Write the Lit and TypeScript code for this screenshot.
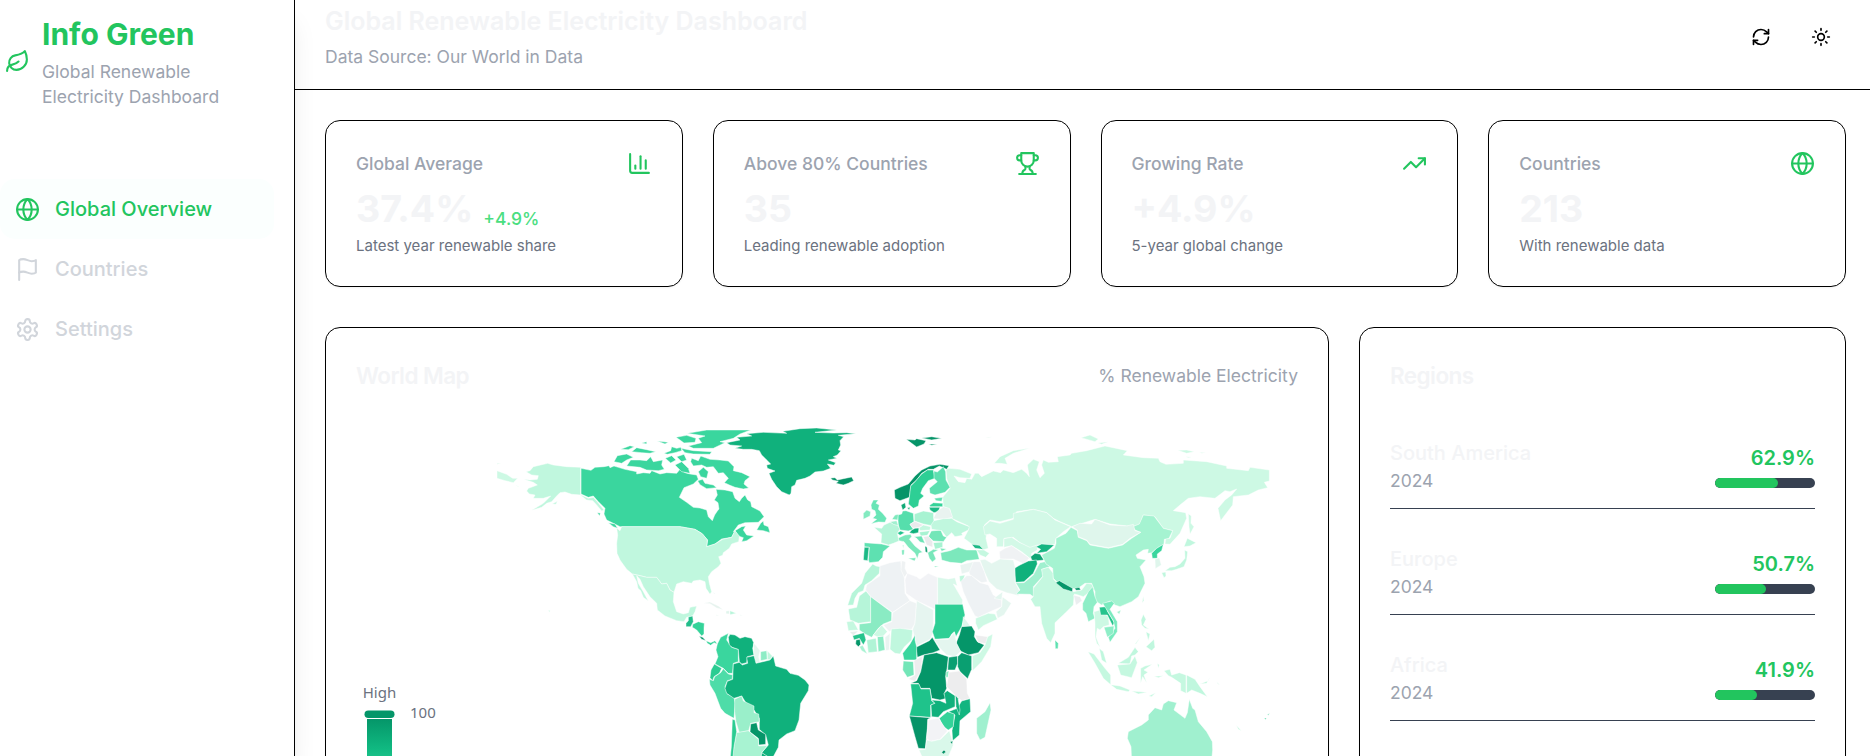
import { LitElement, html, css, svg } from "lit";
import { customElement } from "lit/decorators.js";

type Shape = [string, string];

const ICONS: Record<string, unknown> = {
  leaf: svg`<path d="M11 20A7 7 0 0 1 9.8 6.1C15.5 5 17 4.48 19 2c1 2 2 4.18 2 8 0 5.5-4.78 10-10 10Z"/><path d="M2 21c0-3 1.85-5.36 5.08-6C9.5 14.52 12 13 13 12"/>`,
  globe: svg`<circle cx="12" cy="12" r="10"/><path d="M12 2a14.5 14.5 0 0 0 0 20 14.5 14.5 0 0 0 0-20"/><path d="M2 12h20"/>`,
  flag: svg`<path d="M4 15s1-1 4-1 5 2 8 2 4-1 4-1V3s-1 1-4 1-5-2-8-2-4 1-4 1z"/><path d="M4 22v-7"/>`,
  settings: svg`<path d="M12.22 2h-.44a2 2 0 0 0-2 2v.18a2 2 0 0 1-1 1.73l-.43.25a2 2 0 0 1-2 0l-.15-.08a2 2 0 0 0-2.73.73l-.22.38a2 2 0 0 0 .73 2.73l.15.1a2 2 0 0 1 1 1.72v.51a2 2 0 0 1-1 1.74l-.15.09a2 2 0 0 0-.73 2.73l.22.38a2 2 0 0 0 2.73.73l.15-.08a2 2 0 0 1 2 0l.43.25a2 2 0 0 1 1 1.73V20a2 2 0 0 0 2 2h.44a2 2 0 0 0 2-2v-.18a2 2 0 0 1 1-1.73l.43-.25a2 2 0 0 1 2 0l.15.08a2 2 0 0 0 2.73-.73l.22-.39a2 2 0 0 0-.73-2.73l-.15-.08a2 2 0 0 1-1-1.74v-.5a2 2 0 0 1 1-1.74l.15-.09a2 2 0 0 0 .73-2.73l-.22-.38a2 2 0 0 0-2.73-.73l-.15.08a2 2 0 0 1-2 0l-.43-.25a2 2 0 0 1-1-1.73V4a2 2 0 0 0-2-2z"/><circle cx="12" cy="12" r="3"/>`,
  refresh: svg`<path d="M3 12a9 9 0 0 1 9-9 9.75 9.75 0 0 1 6.74 2.74L21 8"/><path d="M21 3v5h-5"/><path d="M21 12a9 9 0 0 1-9 9 9.75 9.75 0 0 1-6.74-2.74L3 16"/><path d="M8 16H3v5"/>`,
  sun: svg`<circle cx="12" cy="12" r="4"/><path d="M12 2v2M12 20v2M4.93 4.93l1.41 1.41M17.66 17.66l1.41 1.41M2 12h2M20 12h2M6.34 17.66l-1.41 1.41M19.07 4.93l-1.41 1.41"/>`,
  chart: svg`<path d="M3 3v16a2 2 0 0 0 2 2h16"/><path d="M18 17V9"/><path d="M13 17V5"/><path d="M8 17v-3"/>`,
  trophy: svg`<path d="M6 9H4.5a2.5 2.5 0 0 1 0-5H6"/><path d="M18 9h1.5a2.5 2.5 0 0 0 0-5H18"/><path d="M4 22h16"/><path d="M10 14.66V17c0 .55-.47.98-.97 1.21C7.85 18.75 7 20.24 7 22"/><path d="M14 14.66V17c0 .55.47.98.97 1.21C16.15 18.75 17 20.24 17 22"/><path d="M18 2H6v7a6 6 0 0 0 12 0V2Z"/>`,
  trend: svg`<path d="M22 7l-8.5 8.5-5-5L2 17"/><path d="M16 7h6v6"/>`,
};

const icon = (name: string) =>
  html`<svg class="icon" viewBox="0 0 24 24" fill="none" stroke="currentColor" stroke-width="2" stroke-linecap="round" stroke-linejoin="round">${ICONS[name]}</svg>`;

const AMERICAS: Shape[] = [
  ["#10b17c", "740,98 780,90 770,82 815,78 800,71 850,67 920,70 908,64 960,56 1010,54 1070,60 1005,67 1060,69 1100,68 1128,71 1075,76 1091,80 1080,92 1082,105 1075,120 1083,122 1072,135 1060,140 1071,145 1045,150 1067,158 1062,166 1042,162 1052,175 1030,183 1005,186 990,198 975,205 950,211 945,225 935,230 933,250 928,255 905,245 890,230 875,208 867,190 885,183 862,175 860,165 872,162 858,148 845,135 838,122 815,118 790,118 765,115 785,108 750,105"],
  ["#3ad69e", "303,175 333,181 345,172 372,170 387,167 390,173 402,168 415,172 435,178 470,185 470,192 490,188 510,190 515,182 540,192 560,188 590,190 600,178 615,188 630,192 650,195 655,208 640,222 612,233 598,262 620,277 640,292 660,294 680,300 685,320 697,332 704,315 712,303 717,297 714,278 703,270 712,255 708,238 735,240 758,245 765,265 778,275 785,265 795,255 803,270 812,275 815,290 840,303 852,320 835,337 795,338 775,345 760,365 785,350 797,348 790,360 800,375 822,378 800,392 785,395 790,383 775,378 765,362 755,382 725,387 705,402 680,410 683,390 665,370 645,358 600,350 420,350 400,340 380,330 372,312 375,295 355,275 340,258 325,262 303,252"],
  ["#3ad69e", "830,360 842,340 850,333 852,345 865,350 870,368 850,362"],
  ["#3ad69e", "385,338 405,342 413,355 400,350"],
  ["#3ad69e", "352,308 361,309 359,318"],
  ["#3ad69e", "635,145 655,152 662,138 690,148 720,150 745,153 762,170 760,182 785,188 810,200 795,212 792,222 806,234 790,237 765,232 748,225 733,218 745,205 730,188 715,190 700,170 680,172 665,165 640,168 632,155"],
  ["#3ad69e", "440,168 452,150 480,150 500,152 512,140 520,155 548,150 545,165 553,178 535,182 500,180 480,172"],
  ["#3ad69e", "402,155 412,137 440,132 460,142 440,150 425,160"],
  ["#3ad69e", "622,70 680,60 812,60 780,72 760,85 720,95 735,98 700,115 640,115 625,108 665,98 655,85 675,78"],
  ["#3ad69e", "588,82 620,76 648,85 645,97 612,99 600,90"],
  ["#3ad69e", "603,115 640,122 695,125 690,133 640,132 615,128"],
  ["#3ad69e", "455,125 470,113 500,119 527,125 510,130 485,128"],
  ["#3ad69e", "422,118 450,107 463,110 445,119"],
  ["#3ad69e", "485,99 500,95 500,102"],
  ["#3ad69e", "532,93 565,97 555,102"],
  ["#3ad69e", "552,130 572,122 575,110 590,115 603,112 605,122 585,128 562,133"],
  ["#3ad69e", "556,145 575,137 588,150 572,159"],
  ["#3ad69e", "590,140 612,133 620,150 605,155"],
  ["#3ad69e", "585,165 605,155 625,175 630,190 605,185"],
  ["#3ad69e", "655,185 670,172 685,185 680,205 662,200"],
  ["#3ad69e", "653,212 668,208 675,220 700,225 710,233 680,236 660,224"],
  ["#c0f7de", "302,172 260,170 220,165 203,160 160,170 150,182 138,185 155,195 175,197 172,208 150,210 130,208 160,217 172,225 145,235 140,243 148,252 165,255 160,265 190,265 212,258 190,280 155,301 185,292 200,280 215,275 230,258 240,248 255,246 275,253 303,255 325,265 340,262 352,275 372,300 365,303 350,285 338,272 320,270 302,256"],
  ["#c0f7de", "216,282 232,274 228,283"],
  ["#cdf9e4", "51,182 80,193 98,205 113,205 100,218 75,212 51,205"],
  ["#cdf9e4", "51,160 64,160 51,163"],
  ["#cdf9e4", "105,226 122,230 112,229"],
  ["#c0f7de", "410,354 420,362 425,350 600,350 645,358 668,372 682,390 680,410 705,402 728,388 755,382 765,362 778,378 776,395 755,402 748,415 730,428 728,436 716,440 723,460 715,470 695,485 685,500 688,520 695,545 690,553 678,535 675,515 660,510 640,513 635,520 610,515 590,522 582,547 570,540 560,520 545,522 530,502 500,502 480,497 457,492 440,478 420,450 411,430 410,400 413,375"],
  ["#c0f7de", "457,492 480,497 500,502 530,502 545,522 560,520 570,540 582,547 580,575 590,605 610,612 625,608 630,592 650,588 645,605 638,618 620,622 612,635 590,632 555,618 532,600 530,580 510,560 490,530 480,508 470,497 475,520 490,545 505,573 490,562 482,542 474,535 470,515"],
  ["#c9f8e3", "205,600 211,602 208,607"],
  ["#22bd8a", "618,640 625,632 625,621 638,618 640,635 632,650 618,650"],
  ["#34d399", "638,643 655,635 673,640 672,655 672,672 665,678 650,660 637,652"],
  ["#059669", "657,678 668,682 678,692 665,688"],
  ["#34d399", "678,692 692,698 705,692 712,702 702,698 692,706 682,700"],
  ["#e6f3ee", "670,580 690,576 715,588 730,599 710,594 690,581"],
  ["#e0f5ec", "738,603 748,602 748,612 738,611"],
  ["#b6f5d9", "750,602 769,610 750,614"],
  ["#e0f5ec", "708,614 718,616 710,617"],
  ["#e0f5ec", "780,614 788,616 782,617"],
  ["#e9f7f1", "700,545 706,552 702,552"],
  ["#3ad69e", "712,702 722,682 745,670 740,690 755,712 775,718 775,755 760,760 758,790 745,790 730,775 705,762 714,740 708,720"],
  ["#10b17c", "745,682 750,673 765,675 780,685 795,680 815,685 822,700 818,715 822,735 802,740 800,758 785,762 778,755 775,718 757,712 748,705"],
  ["#e4f6ee", "820,700 828,706 840,722 836,740 840,756 826,760 822,735"],
  ["#8decc5", "842,725 860,722 862,748 842,752"],
  ["#c0f7de", "862,722 877,738 870,750 862,748"],
  ["#2bcc92", "693,780 703,762 725,775 718,790 702,800 698,812 690,803"],
  ["#4edca8", "688,808 700,812 704,800 722,788 730,776 745,792 758,795 756,808 742,812 735,830 742,852 762,862 766,880 762,925 735,910 722,895 705,850 690,825"],
  ["#10b17c", "760,762 778,757 787,765 803,760 800,742 822,737 828,760 870,750 880,738 887,768 920,778 930,790 955,796 975,810 987,825 985,842 962,880 957,930 945,962 920,972 897,990 895,1012 880,1040 862,1040 845,1028 865,1005 857,975 838,958 838,925 822,900 800,882 785,858 762,865 740,850 735,835 742,814 758,808"],
  ["#9aefca", "764,868 785,858 790,873 822,888 822,908 836,912 838,935 812,940 806,962 778,968 768,935 764,905"],
  ["#059669", "812,942 830,938 835,960 857,973 857,1003 836,1005 835,985 810,966"],
  ["#a8f3d2", "770,968 805,962 835,988 836,1008 862,1007 845,1028 840,1060 755,1060 762,1010"],
  ["#2bcc92", "757,928 765,930 770,965 762,1010 757,1060 749,1060 754,1010"],
  ["#10b17c", "845,1028 872,1045 868,1060 842,1060"],
];

const EURAFRICA: Shape[] = [
  ["#cdf9e4", "438,178 447,175 480,178 515,192 510,205 480,203 462,198 475,215 495,218 500,205 515,208 525,190 535,190 545,200 580,183 602,188 610,180 640,188 665,178 680,190 688,200 682,165 700,148 718,155 710,180 720,203 733,190 725,165 730,150 745,157 775,155 772,140 810,135 815,130 860,122 915,108 982,122 970,135 1030,143 1075,145 1080,155 1098,163 1150,160 1150,150 1220,155 1280,168 1280,175 1345,182 1350,172 1408,180 1408,213 1393,217 1403,233 1375,240 1345,255 1300,260 1298,285 1275,315 1262,332 1254,295 1275,270 1295,255 1310,237 1290,245 1275,242 1245,265 1200,260 1165,265 1140,285 1120,302 1157,308 1160,325 1140,370 1110,403 1095,402 1097,385 1110,385 1118,362 1090,355 1065,320 1030,315 1020,342 1000,350 930,342 885,328 840,342 815,350 780,335 760,325 740,308 700,298 650,305 640,325 600,335 570,330 553,345 560,370 558,385 565,415 548,420 535,408 515,402 492,385 505,360 505,348 455,325 450,298 430,290 428,262 450,235 440,205"],
  ["#cdf9e4", "583,160 600,140 640,122 690,114 640,130 615,145 622,163 600,160"],
  ["#dff8ec", "555,82 578,80 565,83"],
  ["#069468", "92,204 105,203 112,210 130,206 155,201 161,212 145,220 130,225 108,220 115,214 97,210"],
  ["#069468", "319,88 345,90 350,86 378,92 372,102 350,111 335,100"],
  ["#069468", "365,84 395,80 425,85 395,90"],
  ["#069468", "386,102 412,103 395,106"],
  ["#069468", "283,240 300,232 325,222 345,198 365,180 390,168 420,163 447,167 440,178 418,168 400,178 385,178 365,190 350,210 333,225 328,262 300,272 285,265"],
  ["#2ecf95", "328,262 332,228 345,215 365,192 382,180 400,180 405,205 385,212 368,235 362,250 372,258 358,270 355,288 340,295 325,282"],
  ["#5de0b0", "402,183 412,186 430,170 437,185 438,210 450,232 435,247 405,255 390,250 388,235 412,215 402,205"],
  ["#0fa976", "303,285 315,278 318,292 308,300"],
  ["#0fa976", "322,293 331,292 327,300"],
  ["#69e5b6", "213,285 220,270 235,270 228,280 238,285 235,298 248,310 260,325 255,337 235,336 213,341 230,328 218,325 228,315 225,302 215,298"],
  ["#83eac0", "190,310 200,300 212,305 210,318 190,328"],
  ["#b6f5d9", "222,352 245,355 252,345 270,337 292,345 300,357 292,370 297,393 280,400 265,405 243,398 245,372"],
  ["#56deac", "293,315 305,312 308,303 318,302 340,310 342,335 330,343 340,358 325,363 300,360 295,345"],
  ["#7ee9bd", "276,328 285,315 295,313 293,330"],
  ["#a0f0cf", "270,335 290,332 295,347 280,343"],
  ["#a8f3d2", "343,312 370,303 400,308 402,335 395,347 370,342 343,333"],
  ["#eaeaec", "330,343 345,334 370,345 355,353 338,354"],
  ["#10b17c", "328,368 335,360 345,355 357,354 355,368 340,371"],
  ["#1fc38b", "292,369 302,363 314,368 300,376"],
  ["#7ce8bc", "295,384 315,375 332,373 335,380 328,388 345,408 368,427 357,430 352,446 345,430 325,412 312,395 297,392"],
  ["#7ce8bc", "324,445 348,443 344,453"],
  ["#7ce8bc", "305,420 313,419 312,434 306,435"],
  ["#b6f5d9", "307,405 312,405 310,416"],
  ["#5ee1b1", "193,398 245,402 270,408 250,425 248,442 235,455 208,458 205,450 208,412 193,410"],
  ["#1bb985", "193,412 207,412 203,452 190,450"],
  ["#c5f8e0", "357,354 370,345 392,350 390,360 360,362"],
  ["#a8f3d2", "358,366 390,362 382,376 362,378"],
  ["#73e6b8", "385,380 394,363 422,360 430,378 440,382 430,395 400,393"],
  ["#a8f3d2", "400,398 428,396 428,412 405,418"],
  ["#eaeaec", "370,380 385,378 398,395 398,412 380,405"],
  ["#6be3b5", "342,380 365,378 375,400 360,396 350,385"],
  ["#059669", "375,408 381,412 383,428 376,425"],
  ["#78e7ba", "383,428 400,418 415,420 400,428 408,447 397,456 388,445"],
  ["#7ce8bc", "403,468 417,469 405,472"],
  ["#5ee1b1", "403,265 428,262 425,274 408,272"],
  ["#34d399", "389,286 400,278 428,280 428,290 390,290"],
  ["#1bb985", "388,292 420,292 415,305 402,308 390,300"],
  ["#e9f3f0", "402,322 410,305 430,290 448,295 458,322 430,328 402,326"],
  ["#c0f7de", "402,332 430,326 455,325 470,335 508,350 505,360 485,370 488,376 465,380 455,368 440,382 425,362 395,358 393,345"],
  ["#7ce8bc", "422,428 450,422 475,412 500,420 530,420 538,448 500,452 485,460 450,457 425,450"],
  ["#7ce8bc", "420,414 440,417 425,424"],
  ["#1bb985", "515,403 538,406 550,418 525,415"],
  ["#c5f8e0", "530,420 552,420 568,430 557,442 540,435"],
  ["#d3f9e7", "550,350 570,333 600,340 640,328 640,310 660,306 700,298 740,308 765,330 812,350 790,365 768,385 765,403 715,405 690,415 660,398 640,382 612,385 610,410 590,410 590,385 570,372 555,375"],
  ["#d3f9e7", "612,386 635,382 660,398 690,412 712,405 712,420 695,430 692,447 665,425 635,407 612,412"],
  ["#f0f2f4", "598,425 615,415 635,407 665,428 688,444 672,462 640,447 600,447"],
  ["#15b581", "708,410 725,402 763,405 740,425 710,430 722,418"],
  ["#0fa675", "692,440 705,430 720,432 732,450 705,453 695,450"],
  ["#10b17c", "643,475 660,465 685,453 710,450 712,462 700,490 672,515 647,517"],
  ["#e4f6ef", "540,450 555,448 575,460 600,447 640,450 645,470 645,517 660,545 655,557 620,548 590,537 567,515 553,485"],
  ["#eef2f4", "520,455 540,455 553,485 562,515 545,518 510,495 505,480"],
  ["#e9f4f1", "480,465 520,455 508,485 485,492"],
  ["#c0f7de", "478,498 495,495 487,517 480,515"],
  ["#eef2f4", "482,515 500,497 515,497 540,518 565,525 580,555 605,570 605,590 570,605 535,622 525,618 505,580 490,545"],
  ["#cdf9e4", "527,625 565,610 585,612 592,628 550,647 535,660 527,640"],
  ["#e4f6ef", "607,560 634,580 612,615 593,625 588,605 605,590"],
  ["#e4f6ef", "582,565 608,545 605,570"],
  ["#a0f0cf", "648,552 660,540 647,518 672,518 700,495 713,470 720,458 735,455 750,470 725,478 730,497 700,530 705,563 690,553"],
  ["#b6f5d9", "218,462 228,468 240,470 238,490 215,512 195,525 190,542 175,548 165,565 160,585 143,586 155,550 185,520 195,490"],
  ["#eef2f4", "240,468 270,458 302,453 305,480 313,498 315,550 330,572 278,607 212,560 197,540 200,525 240,497"],
  ["#eff2f3", "305,452 317,455 315,475 322,490 313,502 303,480"],
  ["#f2f3f6", "322,490 350,500 360,508 385,490 412,502 412,595 405,598 350,572 318,550 315,510"],
  ["#d9f8ea", "413,502 445,507 465,503 472,528 460,522 488,570 487,583 413,583"],
  ["#b6f5d9", "145,597 170,592 178,558 198,543 212,560 212,635 175,640 150,630"],
  ["#8aebc3", "212,560 275,607 275,632 250,642 235,655 215,682 195,672 178,660 178,642 212,638"],
  ["#c5f8e0", "140,635 160,633 175,660 145,662"],
  ["#e6efec", "148,665 175,663 160,677"],
  ["#26c48d", "158,677 192,668 198,690 190,705 178,685 162,690"],
  ["#059669", "168,690 180,688 182,703 175,710 167,702"],
  ["#a8f3d2", "178,710 188,706 202,732 185,722"],
  ["#b0f4d6", "200,690 228,685 232,725 205,728"],
  ["#8decc5", "232,680 250,678 255,720 235,725"],
  ["#cdf9e4", "220,675 245,645 262,665 250,678 232,680"],
  ["#e9f4f1", "255,682 270,670 268,720 257,722"],
  ["#eff3f4", "278,608 330,572 350,580 345,640 335,658 280,657 268,665 250,645 275,635"],
  ["#c0f7de", "274,657 300,655 338,660 335,690 312,712 300,732 285,730 270,718"],
  ["#e6f5f0", "350,572 400,600 400,640 398,672 390,688 350,708 345,690 338,658 345,640"],
  ["#2ecf95", "405,583 488,583 495,615 485,650 468,680 463,665 455,672 448,685 405,688 397,665 405,640"],
  ["#dff6ec", "490,620 505,640 525,668 500,650 487,648"],
  ["#059669", "485,650 515,648 525,665 523,680 532,695 553,705 535,728 505,735 480,722 468,700 478,675"],
  ["#e4f6ef", "402,688 445,688 463,667 470,700 482,724 465,740 440,735 420,715"],
  ["#ededee", "525,675 563,680 560,702 535,697"],
  ["#cdf9e4", "563,680 578,672 572,710 545,755 518,782 517,738 540,728 555,705"],
  ["#059669", "348,712 388,692 397,682 420,720 400,728 370,735 352,742"],
  ["#3ad69e", "308,730 330,702 345,675 345,690 350,710 350,750 312,750"],
  ["#73e6b8", "310,753 340,755 342,795 322,802 308,780"],
  ["#ededee", "342,752 368,738 362,785 345,814 325,807 345,795"],
  ["#059669", "372,735 410,728 445,740 442,770 437,800 440,835 432,852 440,865 420,870 395,865 390,835 362,835 355,820 332,820 350,812 362,785"],
  ["#0a9f71", "446,742 472,738 473,760 465,780 443,780"],
  ["#0a9f71", "473,740 485,728 515,738 515,778 503,806 480,785 473,770"],
  ["#8decc5", "438,785 447,783 445,802 438,802"],
  ["#ededee", "447,787 478,783 500,808 502,850 510,866 485,872 465,855 440,830"],
  ["#1fc38b", "332,822 357,822 363,837 390,837 395,872 405,880 392,885 392,922 328,918 338,880"],
  ["#10b17c", "395,870 420,872 438,880 432,850 442,842 465,857 465,890 430,905 415,922 395,920 393,885 405,880"],
  ["#12b580", "472,895 485,873 510,866 512,905 480,932 478,975 458,992 456,962 465,915 445,905"],
  ["#10b17c", "466,855 474,865 480,900 478,915 468,890"],
  ["#34d399", "418,925 442,905 463,912 460,950 445,960 430,950"],
  ["#069468", "328,918 350,920 392,923 383,928 382,955 376,1016 355,1015 345,980"],
  ["#f2f3f6", "385,930 415,925 442,963 420,988 390,994 380,985 383,955"],
  ["#d9f8ea", "376,1018 380,990 395,994 422,988 448,962 455,985 460,1005 445,1040 430,1060 375,1060 357,1020"],
  ["#069468", "425,1027 432,1020 438,1026 430,1032"],
  ["#069468", "450,995 459,993 456,1003"],
  ["#a0f0cf", "530,925 555,905 570,878 573,900 555,982 540,990 530,970"],
];

const ASIA: Shape[] = [
  ["#cdf9e4", "183,83 210,75 235,87 225,95"],
  ["#cdf9e4", "233,99 265,95 245,103"],
  ["#cdf9e4", "473,121 500,120 523,125 500,130"],
  ["#cdf9e4", "538,127 558,128 545,130"],
  ["#cdf9e4", "497,140 514,141 505,143"],
  ["#cdf9e4", "505,311 514,318 513,340 522,350 510,373 507,350"],
  ["#c5f8e0", "40,560 40,535 68,500 65,478 85,472 100,490 100,507 120,528 160,545 185,540 200,520 215,522 225,538 210,545 190,560 175,555 163,552 160,585 135,610 105,638 105,670 92,698 80,685 65,640 60,590 45,590 32,568"],
  ["#ebeef0", "161,556 180,560 186,572 168,586"],
  ["#5ee1b1", "105,690 115,700 114,716 106,716"],
  ["#a5f3d1", "153,352 172,362 175,382 200,392 210,405 265,415 308,405 335,385 362,367 345,360 338,350 358,342 370,315 402,318 430,355 458,362 447,385 433,388 432,402 410,415 395,428 383,430 385,418 370,420 348,435 352,445 378,450 360,470 372,500 375,520 355,560 335,575 300,590 285,585 270,573 245,585 225,572 225,545 215,520 195,520 170,538 120,525 100,505 98,475 78,462 65,435 103,415 108,400 108,385 138,370"],
  ["#059669", "107,518 118,512 158,535 157,545 130,537"],
  ["#059669", "164,535 178,532 182,540 168,541"],
  ["#dff6ec", "157,350 180,340 215,342 225,328 270,345 320,348 340,343 345,362 362,367 330,385 308,403 265,413 210,403 200,390 175,380 172,360"],
  ["#a5f3d1", "290,606 303,600 298,613"],
  ["#cdf9e4", "370,558 366,578 372,572"],
  ["#3ad69e", "395,430 410,415 430,403 425,422 412,432 412,445 397,445"],
  ["#dff6ec", "405,448 418,443 424,465 406,476"],
  ["#c0f7de", "425,488 437,486 438,498 432,503"],
  ["#c0f7de", "435,482 450,472 465,470 480,462 495,445 494,420 503,425 500,450 492,470 470,478 455,482"],
  ["#c0f7de", "492,410 502,385 528,398 510,408"],
  ["#8eeec7", "188,580 205,545 218,530 225,560 232,577 222,590 220,610 225,625 205,635 198,610 188,600"],
  ["#cdf9e4", "222,605 240,600 265,620 268,645 250,650 240,660 232,655 228,680 240,712 230,700 225,680 225,640"],
  ["#26c48d", "238,592 258,590 263,605 283,638 278,648 262,615 242,615"],
  ["#7aebbf", "248,580 275,573 283,580 270,598 292,635 292,665 270,697 265,682 285,655 280,632 262,602"],
  ["#8eeec7", "252,652 282,648 280,670 262,682"],
  ["#c0f7de", "238,715 250,725 260,760 245,750"],
  ["#c0f7de", "295,760 325,742 345,712 355,725 345,735 335,738 330,762"],
  ["#c5f8e0", "292,765 330,762 345,738 352,758 335,803 302,795"],
  ["#c5f8e0", "204,725 222,732 255,775 272,795 272,824 250,805 225,760"],
  ["#c5f8e0", "272,824 300,828 330,840 325,845 290,838"],
  ["#c5f8e0", "335,843 382,847 355,852"],
  ["#c5f8e0", "386,858 407,848 395,860"],
  ["#c5f8e0", "362,775 375,768 397,763 372,780 384,787 372,795 380,818 368,800 362,820"],
  ["#c5f8e0", "412,760 418,765 415,775"],
  ["#c5f8e0", "402,799 430,797 415,803"],
  ["#c5f8e0", "432,782 450,778 455,795 478,788 498,795 498,850 482,842 482,820 455,802 445,797"],
  ["#c0f7de", "500,795 525,808 540,830 562,860 540,850 515,840 500,850"],
  ["#c0f7de", "540,822 565,812 570,800 560,820"],
  ["#c9f8e3", "590,815 600,825 594,822"],
  ["#c0f7de", "363,630 370,613 378,628 370,645 386,657 375,655 365,645"],
  ["#c0f7de", "378,665 390,672 385,692"],
  ["#c0f7de", "378,710 402,688 405,712 395,722"],
  ["#c0f7de", "345,702 362,680 348,702"],
  ["#a0f0cf", "322,985 325,965 365,945 385,930 385,915 405,893 425,900 430,882 445,872 470,878 462,900 495,925 502,908 508,868 518,895 525,900 535,935 560,965 577,995 578,1020 574,1060 335,1060 333,1010"],
  ["#34d399", "733,924 739,924 737,929"],
  ["#34d399", "742,914 749,910 745,916"],
  ["#c0f7de", "649,946 664,962 655,958"],
];

const layer = (x: number, y: number, shapes: Shape[]) =>
  svg`<g transform="translate(${x} ${y}) scale(0.33333)" stroke="#fff" stroke-opacity=".85" stroke-width="1.7" stroke-linejoin="round">${shapes.map(
    ([fill, points]) => svg`<polygon fill=${fill} points=${points} />`
  )}</g>`;

@customElement("app-root")
export class AppRoot extends LitElement {
  static styles = css`
    :host { display: flex; width: 100%; height: 756px; overflow: hidden; background: #fff; font-family: Inter, sans-serif; font-size: 20px; line-height: 30px; }
    * { box-sizing: border-box; }
    h1, h2, h3, p { margin: 0; }
    .icon { display: block; width: 25px; height: 25px; flex: none; }
    .sidebar { flex: none; width: 295px; border-right: 1px solid #000; background: #fff; z-index: 1; box-shadow: 0 20px 25px -5px rgba(0,0,0,.1), 0 8px 10px -6px rgba(0,0,0,.1); padding: 14px 20px 0 0; }
    .brand { display: flex; align-items: center; gap: 12px; padding-left: 5px; color: #22c55e; }
    .brand h1 { font-size: 30px; line-height: 40px; font-weight: 700; }
    .brand p { margin-top: 5px; width: 200px; font-size: 17.5px; line-height: 25px; color: #9ca3af; }
    .nav { padding-top: 70px; }
    .link { display: flex; align-items: center; gap: 15px; height: 60px; padding: 0 15px; border-radius: 15px; font-weight: 500; color: #d1d5db; }
    .link.active { color: #22c55e; background: #fbfffe; }
    .main { flex: 1; min-width: 0; }
    .header { display: flex; align-items: center; justify-content: space-between; height: 90px; border-bottom: 1px solid #000; padding: 4px 24px 20px 30px; }
    .header h2 { font-size: 25px; line-height: 35px; font-weight: 600; color: #f3f4f6; }
    .header p { margin-top: 5px; font-size: 17.5px; line-height: 25px; color: #9ca3af; }
    .actions { display: flex; gap: 10px; }
    .action { display: grid; place-items: center; width: 50px; height: 50px; }
    .action .icon { width: 20px; height: 20px; }
    .content { padding: 30px 24px 0 30px; display: flex; flex-direction: column; gap: 40px; }
    .stats { display: grid; grid-template-columns: repeat(4, 1fr); gap: 30px; }
    .panels { display: grid; grid-template-columns: repeat(3, 1fr); gap: 30px; }
    .card { border: 1px solid #000; border-radius: 15px; padding: 30px; background: #fff; box-shadow: 0 1px 2px rgba(0,0,0,.05); }
    .stat-head { display: flex; align-items: center; justify-content: space-between; height: 25px; color: #22c55e; }
    .stat-head h3 { font-size: 17.5px; line-height: 25px; font-weight: 500; color: #9ca3af; }
    .stat-value { display: flex; align-items: flex-end; gap: 10px; margin-top: 10px; height: 45px; }
    .value { font-size: 37.5px; line-height: 45px; font-weight: 700; color: #f3f4f6; }
    .delta { font-size: 17.5px; line-height: 25px; font-weight: 500; color: #4ade80; }
    .note { margin-top: 5px; font-size: 15px; line-height: 20px; color: #6b7280; }
    .map { grid-column: span 2; height: 620px; }
    .panel-head { display: flex; align-items: center; justify-content: space-between; height: 35px; margin-bottom: 30px; }
    .panel-head h3 { font-size: 22.5px; line-height: 35px; font-weight: 600; letter-spacing: -0.025em; color: #f3f4f6; }
    .panel-head span { font-size: 17.5px; line-height: 25px; color: #9ca3af; }
    .world { display: block; width: 942px; height: 500px; }
    .legend { font-family: "Noto Sans", sans-serif; font-size: 15px; fill: #6b7280; }
    .regions { display: flex; flex-direction: column; gap: 20px; }
    .region { display: flex; align-items: center; justify-content: space-between; padding: 15px 0; border-bottom: 1px solid #374151; }
    .name { font-weight: 500; color: #f3f4f6; }
    .year { font-size: 17.5px; line-height: 25px; color: #9ca3af; }
    .share { width: 100px; }
    .pct { text-align: right; font-weight: 600; color: #22c55e; }
    .track { margin-top: 5px; height: 10px; border-radius: 5px; background: #374151; overflow: hidden; }
    .fill { height: 10px; border-radius: 5px; background: #22c55e; }
  `;

  private stats = [
    { label: "Global Average", icon: "chart", value: "37.4%", delta: "+4.9%", note: "Latest year renewable share" },
    { label: "Above 80% Countries", icon: "trophy", value: "35", delta: "", note: "Leading renewable adoption" },
    { label: "Growing Rate", icon: "trend", value: "+4.9%", delta: "", note: "5-year global change" },
    { label: "Countries", icon: "globe", value: "213", delta: "", note: "With renewable data" },
  ];

  private regions = [
    { name: "South America", pct: 62.9 },
    { name: "Europe", pct: 50.7 },
    { name: "Africa", pct: 41.9 },
  ];

  render() {
    return html`
      <aside class="sidebar">
        <div class="brand">
          ${icon("leaf")}
          <div><h1>Info Green</h1><p>Global Renewable Electricity Dashboard</p></div>
        </div>
        <nav class="nav">
          <div class="link active">${icon("globe")}<span>Global Overview</span></div>
          <div class="link">${icon("flag")}<span>Countries</span></div>
          <div class="link">${icon("settings")}<span>Settings</span></div>
        </nav>
      </aside>
      <main class="main">
        <header class="header">
          <div><h2>Global Renewable Electricity Dashboard</h2><p>Data Source: Our World in Data</p></div>
          <div class="actions">
            <div class="action">${icon("refresh")}</div>
            <div class="action">${icon("sun")}</div>
          </div>
        </header>
        <div class="content">
          <section class="stats">
            ${this.stats.map(
              (s) => html`<div class="card">
                <div class="stat-head"><h3>${s.label}</h3>${icon(s.icon)}</div>
                <div class="stat-value"><span class="value">${s.value}</span>${s.delta ? html`<span class="delta">${s.delta}</span>` : ""}</div>
                <p class="note">${s.note}</p>
              </div>`
            )}
          </section>
          <section class="panels">
            <div class="card map">
              <div class="panel-head"><h3>World Map</h3><span>% Renewable Electricity</span></div>
              <svg class="world" viewBox="356 423 942 500">
                <defs>
                  <linearGradient id="scale" x1="0" y1="0" x2="0" y2="1">
                    <stop offset="0" stop-color="#059669" />
                    <stop offset=".17" stop-color="#10b981" />
                    <stop offset=".34" stop-color="#34d399" />
                    <stop offset=".5" stop-color="#6ee7b7" />
                    <stop offset="1" stop-color="#f3f4f6" />
                  </linearGradient>
                </defs>
                ${layer(800, 410, EURAFRICA)} ${layer(1020, 410, ASIA)} ${layer(480, 410, AMERICAS)}
                <rect x="367" y="719" width="25" height="175" fill="url(#scale)" />
                <rect x="364.5" y="710.5" width="30" height="7.5" rx="3.75" fill="#059669" />
                <text class="legend" x="379.5" y="698" text-anchor="middle">High</text>
                <text class="legend" x="410" y="718">100</text>
              </svg>
            </div>
            <div class="card">
              <div class="panel-head"><h3>Regions</h3></div>
              <div class="regions">
                ${this.regions.map(
                  (r) => html`<div class="region">
                    <div><div class="name">${r.name}</div><div class="year">2024</div></div>
                    <div class="share">
                      <div class="pct">${r.pct}%</div>
                      <div class="track"><div class="fill" style="width:${r.pct}%"></div></div>
                    </div>
                  </div>`
                )}
              </div>
            </div>
          </section>
        </div>
      </main>
    `;
  }
}
